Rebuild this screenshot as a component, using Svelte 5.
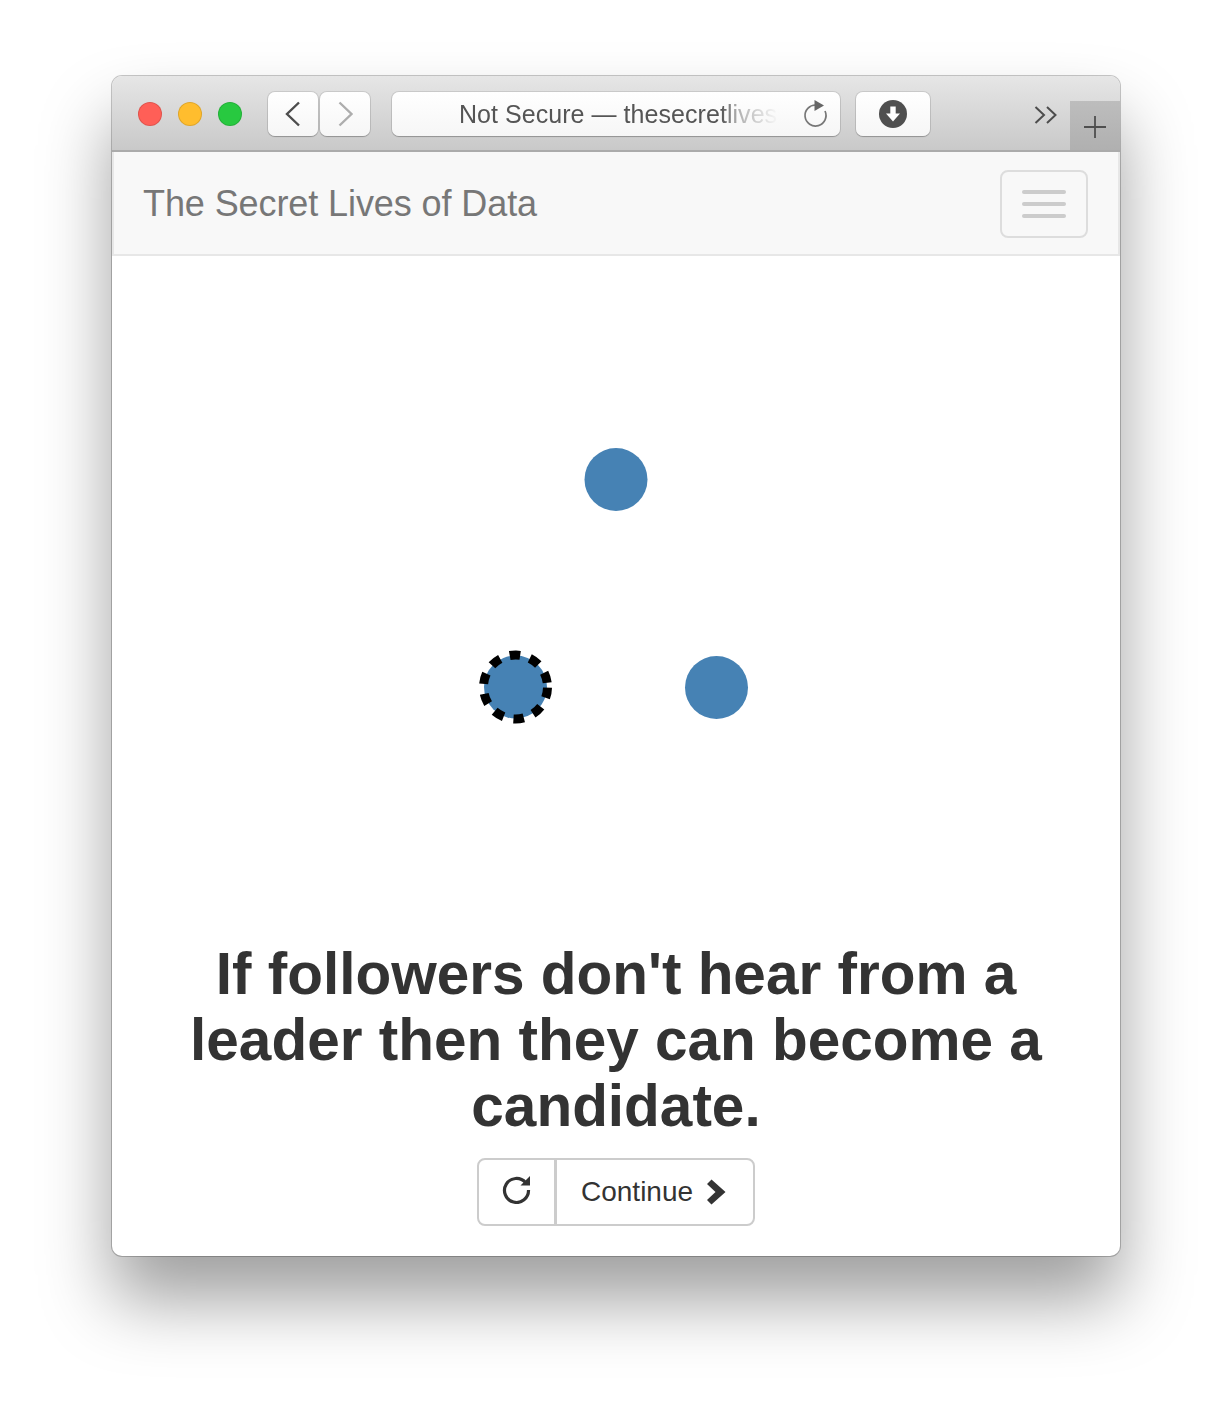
<script>
	let nodes = [
		{ x: 504, y: 223.5 },
		{ x: 604.5, y: 431.5 }
	];
</script>

<div class="page">
	<div class="window">
		<header class="toolbar">
			<div class="lights">
				<span class="light red"></span>
				<span class="light yellow"></span>
				<span class="light green"></span>
			</div>
			<div class="nav-buttons">
				<button class="tool nav" aria-label="Back">
					<svg width="18" height="26" viewBox="0 0 18 26"><path d="M15 1.5 L3 13 L15 24.5" fill="none" stroke="#4d4d4d" stroke-width="2.4" /></svg>
				</button>
				<button class="tool nav" aria-label="Forward">
					<svg width="18" height="26" viewBox="0 0 18 26"><path d="M3.5 1.5 L15.5 13 L3.5 24.5" fill="none" stroke="#adadad" stroke-width="2.4" /></svg>
				</button>
			</div>
			<div class="tool address">
				<span class="url">Not Secure — thesecretlives</span>
				<svg class="reload" width="26" height="30" viewBox="0 0 26 30">
					<path d="M13 7 A10.5 10.5 0 1 0 22 13" fill="none" stroke="#777" stroke-width="1.7" />
					<path d="M11.5 2 L21 7.5 L11.5 13 Z" fill="#666" />
				</svg>
			</div>
			<button class="tool download" aria-label="Downloads">
				<svg width="28" height="28" viewBox="0 0 28 28">
					<circle cx="14" cy="14" r="14" fill="#4f4f4f" />
					<path d="M11.3 6.5 H16.7 V13.5 H21 L14 21.5 L7 13.5 H11.3 Z" fill="#fff" />
				</svg>
			</button>
			<div class="spacer"></div>
			<svg class="more" width="24" height="18" viewBox="0 0 24 18">
				<path d="M1.5 1 L10 9 L1.5 17 M13 1 L21.5 9 L13 17" fill="none" stroke="#4d4d4d" stroke-width="2" />
			</svg>
			<button class="new-tab" aria-label="New tab">
				<svg width="24" height="24" viewBox="0 0 24 24"><path d="M12 1 V23 M1 12 H23" stroke="#4f4f4f" stroke-width="1.8" /></svg>
			</button>
		</header>

		<nav class="navbar">
			<span class="brand">The Secret Lives of Data</span>
			<button class="toggle" aria-label="Toggle navigation">
				<span></span>
				<span></span>
				<span></span>
			</button>
		</nav>

		<main class="content">
			<svg class="diagram" width="1008" height="676" viewBox="0 0 1008 676">
				{#each nodes as n}
					<circle cx={n.x} cy={n.y} r="31.5" fill="steelblue" />
				{/each}
				<circle cx="403.5" cy="431" r="31.5" fill="steelblue" />
				<!-- dash pattern doesn't close evenly, the short gap is on the right like the original -->
				<circle
					cx="403.5"
					cy="431"
					r="32"
					fill="none"
					stroke="#000"
					stroke-width="9"
					stroke-dasharray="10.5 10.1"
					transform="rotate(1 403.5 431)"
				/>
			</svg>
			<h1>If followers don't hear from a leader then they can become a candidate.</h1>
			<div class="btn-group">
				<button class="btn first" aria-label="Restart">
					<svg width="30" height="30" viewBox="0 0 30 30">
						<path d="M23.5 8.5 A12 12 0 1 0 26.5 16" fill="none" stroke="#333" stroke-width="3.2" />
						<path d="M28 2 V11.5 H18.5 Z" fill="#333" />
					</svg>
				</button>
				<button class="btn second">
					Continue
					<svg width="20" height="28" viewBox="0 0 20 28"><path d="M1 6 L5.5 1.5 L19.5 14 L5.5 26.5 L1 22 L9.5 14 Z" fill="#333" /></svg>
				</button>
			</div>
		</main>
	</div>
</div>

<style>
	:global(body) {
		background: #fff;
	}
	.page {
		width: 1232px;
		height: 1404px;
		padding: 76px 112px 0;
		box-sizing: border-box;
		overflow: hidden;
		font-family: "Liberation Sans", Arial, sans-serif;
	}
	.window {
		width: 1008px;
		height: 1180px;
		border-radius: 10px;
		background: #fff;
		overflow: hidden;
		box-shadow: 0 0 0 1px rgba(0, 0, 0, 0.22), 0 44px 70px rgba(0, 0, 0, 0.38);
	}
	.toolbar {
		height: 76px;
		box-sizing: border-box;
		display: flex;
		align-items: flex-start;
		padding: 16px 0 0 26px;
		background: linear-gradient(#e6e6e6, #c9c9c9);
		border-bottom: 2px solid #ababab;
	}
	.lights {
		display: flex;
		gap: 16px;
		margin-top: 10px;
	}
	.light {
		width: 24px;
		height: 24px;
		border-radius: 50%;
		box-sizing: border-box;
		border: 1px solid rgba(0, 0, 0, 0.12);
	}
	.red { background: #ff5f57; }
	.yellow { background: #ffbd2e; }
	.green { background: #28c940; }
	.tool {
		height: 44px;
		box-sizing: border-box;
		background: linear-gradient(#fff, #f6f6f6);
		border: none;
		border-radius: 7px;
		box-shadow: 0 0 0 1px rgba(0, 0, 0, 0.1), 0 1px 1px rgba(0, 0, 0, 0.2);
		padding: 0;
		display: flex;
		align-items: center;
		justify-content: center;
	}
	.nav-buttons {
		display: flex;
		gap: 2px;
		margin-left: 26px;
	}
	.nav {
		width: 50px;
	}
	.address {
		width: 448px;
		margin-left: 22px;
		position: relative;
		justify-content: flex-start;
		padding-left: 67px;
	}
	.url {
		width: 320px;
		overflow: hidden;
		white-space: nowrap;
		font-size: 25px;
		letter-spacing: 0.05px;
		color: #555;
		-webkit-mask-image: linear-gradient(90deg, #000 82%, rgba(0, 0, 0, 0.45) 87%, transparent 100%);
		mask-image: linear-gradient(90deg, #000 82%, rgba(0, 0, 0, 0.45) 87%, transparent 100%);
	}
	.reload {
		position: absolute;
		right: 11px;
		top: 6px;
	}
	.download {
		width: 74px;
		margin-left: 16px;
	}
	.spacer {
		flex: 1;
	}
	.more {
		margin-top: 14px;
		margin-right: 12px;
	}
	.new-tab {
		width: 50px;
		height: 49px;
		margin-top: 9px;
		background: linear-gradient(#bdbdbd, #b0b0b0);
		border: none;
		padding: 2px 0 0;
		display: flex;
		align-items: center;
		justify-content: center;
	}
	.navbar {
		height: 104px;
		box-sizing: border-box;
		display: flex;
		align-items: center;
		justify-content: space-between;
		padding: 2px 30px 0 29px;
		background: #f8f8f8;
		border: 2px solid #e7e7e7;
		border-top: none;
	}
	.brand {
		font-size: 36px;
		letter-spacing: -0.09px;
		color: #777;
	}
	.toggle {
		width: 88px;
		height: 68px;
		box-sizing: border-box;
		border: 2px solid #ddd;
		border-radius: 8px;
		background: transparent;
		padding: 0;
		display: flex;
		flex-direction: column;
		align-items: center;
		justify-content: center;
		gap: 8px;
	}
	.toggle span {
		width: 44px;
		height: 4px;
		border-radius: 2px;
		background: #ccc;
	}
	.content {
		display: flex;
		flex-direction: column;
		align-items: center;
	}
	.diagram {
		display: block;
	}
	h1 {
		width: 880px;
		margin: 9px 0 0;
		text-align: center;
		font-size: 58.5px;
		font-weight: 700;
		line-height: 66px;
		color: #333;
	}
	.btn-group {
		display: flex;
		margin-top: 19px;
	}
	.btn {
		height: 68px;
		box-sizing: border-box;
		background: #fff;
		border: 2px solid #ccc;
		color: #333;
		font-family: inherit;
		font-size: 28px;
		display: flex;
		align-items: center;
		padding: 0;
	}
	.first {
		width: 79px;
		justify-content: center;
		border-radius: 8px 0 0 8px;
	}
	.first svg {
		margin-bottom: 6px;
	}
	.second {
		width: 200px;
		margin-left: -1px;
		padding-left: 24px;
		gap: 13px;
		border-radius: 0 8px 8px 0;
	}
</style>
